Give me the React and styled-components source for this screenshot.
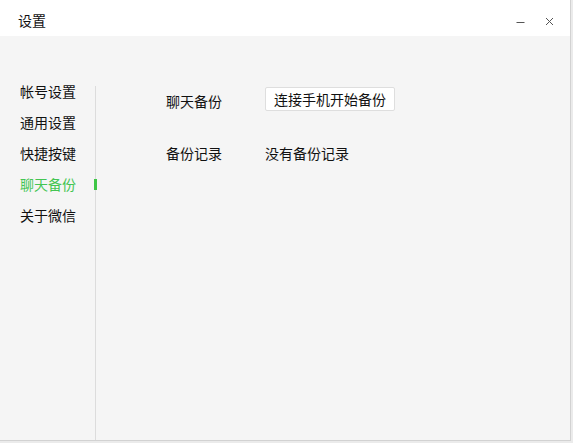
import React from 'react';
import styled, { createGlobalStyle } from 'styled-components';

const GlobalStyle = createGlobalStyle`
  html, body {
    margin: 0;
    padding: 0;
    background: #ebebeb;
  }
  body {
    font-family: "Noto Sans CJK SC", "Noto Sans", sans-serif;
  }
`;

const Window = styled.div`
  width: 570px;
  height: 440px;
  display: flex;
  flex-direction: column;
  background: #f5f5f5;
  border-right: 1px solid #d2d2d2;
  border-bottom: 1px solid #d2d2d2;
  color: #111;
  font-size: 14px;
`;

const TitleBar = styled.div`
  height: 36px;
  flex: none;
  display: flex;
  align-items: center;
  background: #fff;
  padding: 0 6px 0 18px;
`;

const Title = styled.div`
  flex: 1;
  line-height: 20px;
  padding-top: 3px;
`;

const WinButton = styled.button`
  width: 29px;
  height: 36px;
  padding: ${p => p.$drop || 0}px 0 0;
  border: 0;
  background: none;
  display: flex;
  align-items: center;
  justify-content: center;
  color: #555;
`;

const Body = styled.div`
  flex: 1;
  display: flex;
`;

const Sidebar = styled.nav`
  width: 95px;
  margin-top: 50px;
  border-right: 1px solid #dcdcdc;
`;

const NavList = styled.ul`
  list-style: none;
  margin: -5px 0 0;
  padding: 0;
`;

const NavItem = styled.li`
  position: relative;
  height: 20px;
  line-height: 20px;
  margin-bottom: 11px;
  padding-left: 20px;
  color: ${p => (p.$active ? '#44c553' : '#111')};

  &::after {
    content: '';
    display: ${p => (p.$active ? 'block' : 'none')};
    position: absolute;
    right: -2px;
    top: 5px;
    width: 3px;
    height: 11px;
    background: #3ec646;
  }
`;

const Content = styled.div`
  flex: 1;
  padding: 51px 0 0 70px;
  display: flex;
  flex-direction: column;
  gap: 32px;
`;

const Row = styled.div`
  display: flex;
  align-items: center;
  height: ${p => p.$h || 20}px;
`;

const Label = styled.div`
  width: 99px;
  line-height: 20px;
  padding-top: ${p => p.$shift || 0}px;
`;

const Value = styled.div`
  line-height: 20px;
`;

const ActionButton = styled.button`
  height: 24px;
  padding: 0 8px;
  background: #fff;
  border: 1px solid #dedede;
  border-radius: 2px;
  font: inherit;
  font-size: 14px;
  color: #111;
  line-height: 20px;
`;

const navItems = ['帐号设置', '通用设置', '快捷按键', '聊天备份', '关于微信'];

export default function App() {
  return (
    <>
      <GlobalStyle />
      <Window>
        <TitleBar>
          <Title>设置</Title>
          <WinButton aria-label="minimize" $drop={3}>
            <svg width="9" height="9" viewBox="0 0 9 9">
              <path d="M0.5 7.5h8" stroke="currentColor" strokeWidth="1" />
            </svg>
          </WinButton>
          <WinButton aria-label="close" $drop={7}>
            <svg width="9" height="9" viewBox="0 0 9 9">
              <path d="M1 1l7 7M8 1l-7 7" stroke="currentColor" strokeWidth="1" />
            </svg>
          </WinButton>
        </TitleBar>
        <Body>
          <Sidebar>
            <NavList>
              {navItems.map(item => (
                <NavItem key={item} $active={item === '聊天备份'}>
                  {item}
                </NavItem>
              ))}
            </NavList>
          </Sidebar>
          <Content>
            <Row $h={24}>
              <Label $shift={4}>聊天备份</Label>
              <ActionButton>连接手机开始备份</ActionButton>
            </Row>
            <Row>
              <Label>备份记录</Label>
              <Value>没有备份记录</Value>
            </Row>
          </Content>
        </Body>
      </Window>
    </>
  );
}
